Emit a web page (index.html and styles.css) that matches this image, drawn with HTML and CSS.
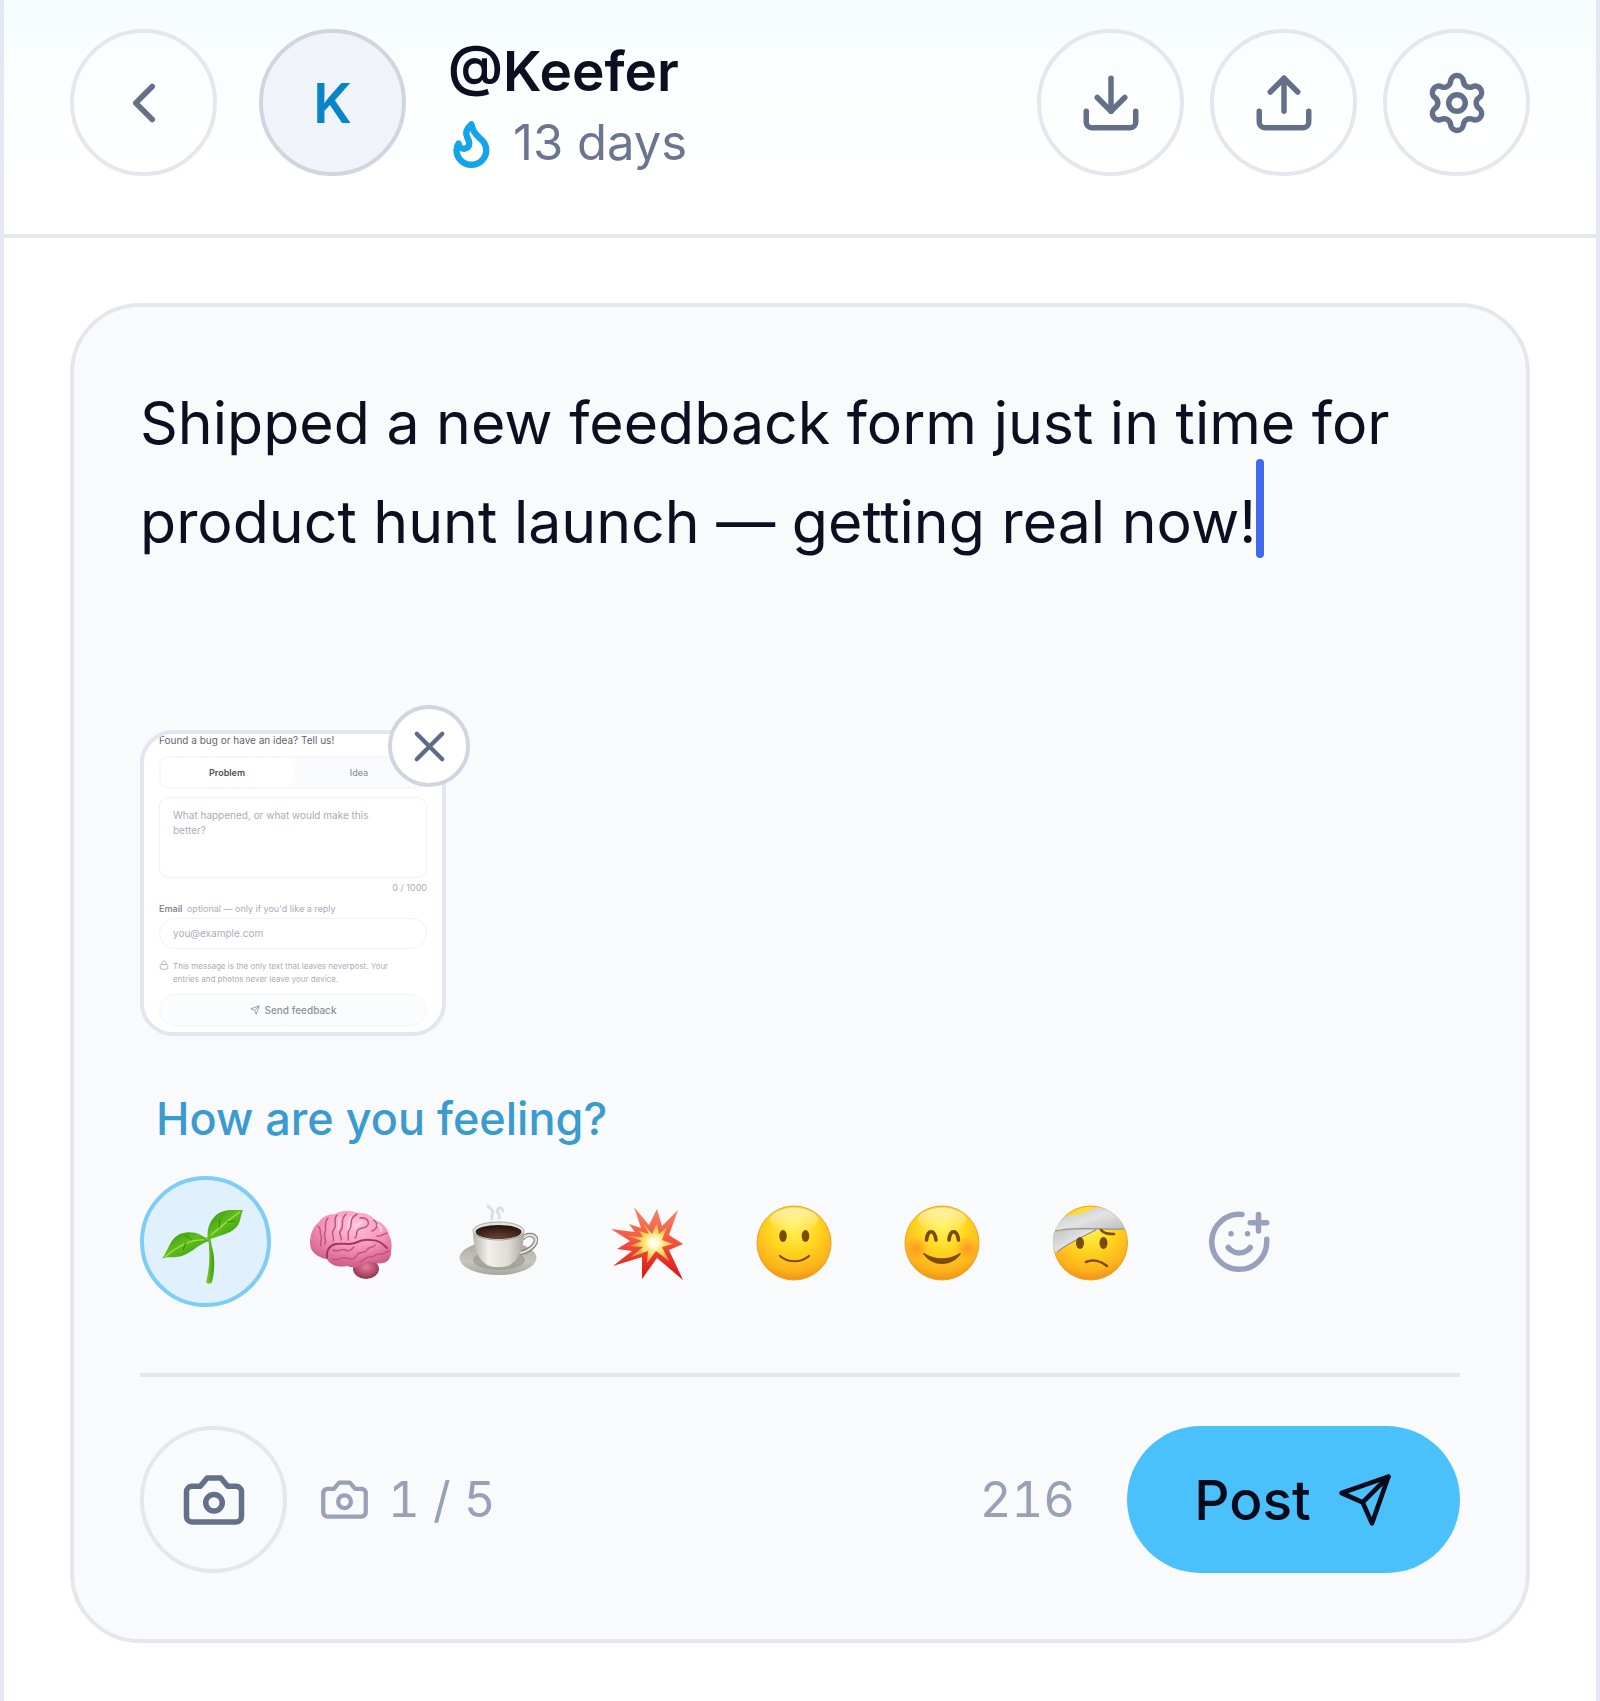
FILE: index.html
```html
<!DOCTYPE html>
<html lang="en">
<head>
<meta charset="utf-8">
<meta name="viewport" content="width=device-width, initial-scale=1">
<title>@Keefer</title>
<link rel="stylesheet" href="styles.css">
</head>
<body>
<div class="app">
  <header class="topbar">
    <button class="round-btn" type="button" aria-label="Back">
      <svg class="icon" viewBox="0 0 24 24"><path d="m15 18-6-6 6-6"/></svg>
    </button>
    <div class="avatar">K</div>
    <div class="profile">
      <h1 class="handle">@Keefer</h1>
      <p class="streak">
        <svg class="icon icon-small flame" viewBox="1 0 24 24"><path d="M8.5 14.5A2.5 2.5 0 0 0 11 12c0-1.38-.5-2-1-3-1.072-2.143-.224-4.054 2-6 .5 2.5 2 4.9 4 6.5 2 1.6 3 3.5 3 5.5a7 7 0 1 1-14 0c0-1.153.433-2.294 1-3a2.5 2.5 0 0 0 2.5 2.5z"/></svg>
        <span>13 days</span>
      </p>
    </div>
    <div class="actions">
      <button class="round-btn" type="button" aria-label="Download">
        <svg class="icon" viewBox="0 0 24 24"><path d="M21 15v4a2 2 0 0 1-2 2H5a2 2 0 0 1-2-2v-4"/><path d="m7 10 5 5 5-5"/><path d="M12 15V3"/></svg>
      </button>
      <button class="round-btn" type="button" aria-label="Upload">
        <svg class="icon" viewBox="0 0 24 24"><path d="M21 15v4a2 2 0 0 1-2 2H5a2 2 0 0 1-2-2v-4"/><path d="m17 8-5-5-5 5"/><path d="M12 3v12"/></svg>
      </button>
      <button class="round-btn" type="button" aria-label="Settings">
        <svg class="icon" viewBox="0 0 24 24"><path d="M9.671 4.136a2.34 2.34 0 0 1 4.659 0 2.34 2.34 0 0 0 3.319 1.915 2.34 2.34 0 0 1 2.33 4.033 2.34 2.34 0 0 0 0 3.831 2.34 2.34 0 0 1-2.33 4.033 2.34 2.34 0 0 0-3.319 1.915 2.34 2.34 0 0 1-4.659 0 2.34 2.34 0 0 0-3.32-1.915 2.34 2.34 0 0 1-2.33-4.033 2.34 2.34 0 0 0 0-3.831A2.34 2.34 0 0 1 6.35 6.051a2.34 2.34 0 0 0 3.319-1.915"/><circle cx="12" cy="12" r="3"/></svg>
      </button>
    </div>
  </header>

  <main class="content">
    <form class="composer">
      <div class="entry">
        <textarea class="entry-text" rows="3" aria-label="New entry" spellcheck="false">Shipped a new feedback form just in time for product hunt launch — getting real now!</textarea>
        <span class="caret"></span>
      </div>

      <div class="attachment">
        <div class="shot" role="img" aria-label="Feedback form">
          <p class="shot-title">Found a bug or have an idea? Tell us!</p>
          <div class="shot-tabs"><span class="shot-tab shot-tab-on">Problem</span><span class="shot-tab">Idea</span></div>
          <div class="shot-area">What happened, or what would make this better?</div>
          <p class="shot-count">0 / 1000</p>
          <p class="shot-label"><b>Email</b> optional — only if you'd like a reply</p>
          <div class="shot-input">you@example.com</div>
          <div class="shot-note">
            <svg class="shot-icon" viewBox="0 0 24 24"><rect x="3" y="11" width="18" height="11" rx="2"/><path d="M7 11V7a5 5 0 0 1 10 0v4"/></svg>
            <p>This message is the only text that leaves neverpost. Your entries and photos never leave your device.</p>
          </div>
          <div class="shot-send">
            <svg class="shot-icon" viewBox="0 0 24 24"><path d="m22 2-7 20-4-9-9-4Z"/><path d="M22 2 11 13"/></svg>
            <span>Send feedback</span>
          </div>
        </div>
        <button class="remove" type="button" aria-label="Remove photo">
          <svg class="icon icon-small" viewBox="0 0 24 24"><path d="M18 6 6 18"/><path d="m6 6 12 12"/></svg>
        </button>
      </div>

      <p class="mood-label" id="mood-label">How are you feeling?</p>
      <div class="moods" role="group" aria-labelledby="mood-label">
        <button class="mood mood-on" type="button" aria-label="Growing" aria-pressed="true">
          <svg class="emoji" viewBox="0 0 88 88">
            <defs>
              <linearGradient id="leaf" x1="0" y1="0" x2="1" y2="1"><stop offset="0" stop-color="#2f8f10"/><stop offset=".45" stop-color="#62bd1c"/><stop offset="1" stop-color="#2f930c"/></linearGradient>
              <linearGradient id="stem" x1="0" y1="0" x2="1" y2="0"><stop offset="0" stop-color="#8fd63b"/><stop offset="1" stop-color="#3e9a12"/></linearGradient>
            </defs>
            <path fill="url(#stem)" d="M43 39c3 2 4 5 4 10 1 12 0 24-3 35 1 2 5 2 6 0 3-12 3-25 0-35-1-5-1-8-3-10z"/>
            <path fill="url(#leaf)" d="M46 42C44 30 49 20 57 15c7-4 15-3 24-3-2 4-2 8-4 13-5 11-19 12-31 17z"/>
            <path fill="url(#leaf)" d="M47 43C39 35 29 32 18 36 8 40 6 53 0 61c5-3 8-1 14-2 14-1 20-12 33-16z"/>
            <path fill="none" stroke="#a5e04d" stroke-width="1.3" d="M49 37C58 30 66 22 78 14M42 42C29 41 16 48 3 59"/>
            <path fill="none" stroke="#277f0b" stroke-width=".8" d="M57 30l1-9M65 24l8-1M30 42l-7-5M24 44l-3 8"/>
          </svg>
        </button>
        <button class="mood" type="button" aria-label="Thinking">
          <svg class="emoji" viewBox="0 0 88 88">
            <defs>
              <radialGradient id="brain" cx=".55" cy=".25" r=".75"><stop offset="0" stop-color="#fdc3d8"/><stop offset=".5" stop-color="#f799bb"/><stop offset="1" stop-color="#cf5a86"/></radialGradient>
              <radialGradient id="cereb" cx=".5" cy=".4" r=".6"><stop offset="0" stop-color="#e5819c"/><stop offset="1" stop-color="#93304f"/></radialGradient>
            </defs>
            <ellipse cx="56" cy="71" rx="13" ry="10" fill="url(#cereb)"/>
            <path fill="url(#brain)" d="M17 61C8 60 0 54 0 45c0-7 2-15 8-20 4-6 10-9 17-9 7-4 16-4 22-1 8-1 14 2 18 7 7 2 13 8 14 15 3 5 3 12 2 17 0 7-4 11-9 11-6 2-10-2-15-1-5 7-15 6-20 4-9 2-17-1-20-7z"/>
            <g fill="none" stroke="#c4537f" stroke-width="1.5" stroke-linecap="round">
              <path stroke="#a23763" stroke-width="2" d="M17 60c-1-8 3-13 9-14 8-1 12 1 19-1 6-3 10-4 16-3 8 0 12 4 16 8"/>
              <path d="M8 28c4 3 1 7 3 10s-2 6 0 10M18 20c-5 6-1 9-3 14s2 7 0 12M27 17c-5 5 1 9-3 14s1 8-1 12M36 16c-7 7-1 11-5 16s2 6 0 10M47 16c-10 6-3 11-8 16-2 4 0 7-1 10M50 20c8-1 10 5 7 8s-6 1-9 4 0 6-3 8M64 22c5 5 3 9-2 11M77 35c-4 1-6 4-10 3"/>
              <path d="M23 52c5 3 8-2 12 0s6 0 9-3M23 61c6 3 8-3 13-1s9 1 11-3 8-1 10-5 7-2 8-5M50 64c4-1 5-6 10-5s5-4 10-3 4-2 9-3"/>
            </g>
            <g fill="none" stroke="#ffd9e6" stroke-width="2" stroke-linecap="round" opacity=".8"><path d="M30 20c-2 4 0 7-2 11M41 19c-4 5-1 8-3 12M52 24c-3 2-6 2-7 6M68 27c3 2 4 4 3 6"/></g>
          </svg>
        </button>
        <button class="mood" type="button" aria-label="Coffee">
          <svg class="emoji" viewBox="0 0 88 88">
            <defs>
              <linearGradient id="saucer" x1="0" y1="0" x2="0" y2="1"><stop offset="0" stop-color="#a6a69f"/><stop offset=".6" stop-color="#c6c6be"/><stop offset="1" stop-color="#a7a79e"/></linearGradient>
              <linearGradient id="cup" x1="0" y1="0" x2="1" y2="0"><stop offset="0" stop-color="#b5b4ac"/><stop offset=".3" stop-color="#f1f0ea"/><stop offset=".7" stop-color="#dddcd4"/><stop offset="1" stop-color="#a9a89f"/></linearGradient>
              <radialGradient id="coffee" cx=".5" cy=".9" r=".8"><stop offset="0" stop-color="#6a4331"/><stop offset="1" stop-color="#281510"/></radialGradient>
            </defs>
            <path fill="none" stroke="#cfd2d4" stroke-width="3" stroke-linecap="round" opacity=".7" d="M34 21c-2-4 3-5 0-9-2-3-4-2-4-4M41 20c2-4-4-6-1-9 2-2 4-1 5 2"/>
            <ellipse cx="40" cy="60" rx="38.5" ry="17" fill="url(#saucer)"/>
            <ellipse cx="41" cy="62" rx="26" ry="10" fill="#92928a" opacity=".6"/>
            <path fill="none" stroke="#777870" stroke-width="4.5" d="M64 41c3-4 8-5 12-3 5 4 0 14-14 17"/>
            <path fill="none" stroke="#dedfd8" stroke-width="2.5" d="M64 41c3-4 8-5 12-3 5 4 0 14-14 17"/>
            <path fill="url(#cup)" d="M15 34c0 17 6 28 14 33 7 3 16 3 23 0 8-5 14-16 14-33z"/>
            <ellipse cx="40.5" cy="33" rx="25.5" ry="9" fill="#e5e4dd" stroke="#96968f" stroke-width=".8"/>
            <ellipse cx="40.5" cy="34" rx="23" ry="7" fill="url(#coffee)"/>
          </svg>
        </button>
        <button class="mood" type="button" aria-label="Explosive">
          <svg class="emoji" viewBox="0 0 88 88">
            <defs>
              <linearGradient id="boom" x1="0" y1="0" x2="0" y2="1"><stop offset="0" stop-color="#fb8468"/><stop offset=".5" stop-color="#f0523c"/><stop offset="1" stop-color="#d70f12"/></linearGradient>
              <radialGradient id="spark" gradientUnits="userSpaceOnUse" cx="48" cy="45" r="22"><stop offset="0" stop-color="#fff"/><stop offset=".2" stop-color="#fffbd7"/><stop offset=".5" stop-color="#ffe064"/><stop offset="1" stop-color="#fb9a43"/></radialGradient>
            </defs>
            <path fill="url(#boom)" d="M28 9 43 27 51 11 56 28 72 12 63 37 77 46 63 52 77 82 51 60 36 81 36 59 7 68 26 53 11 51 24 43 5 31 29 34 23 26 35 30z"/>
            <path fill="url(#spark)" d="M38 26 46 36 51 25 53 36 61 29 56 42 67 46 56 49 63 63 50 53 41 65 42 53 25 59 37 49 24 48 36 43 22 38 37 39 33 33 43 36z"/>
          </svg>
        </button>
        <button class="mood" type="button" aria-label="Okay">
          <svg class="emoji" viewBox="0 0 88 88">
            <defs>
              <radialGradient id="face" cx=".5" cy=".28" r=".75"><stop offset="0" stop-color="#fff458"/><stop offset=".45" stop-color="#fed51f"/><stop offset=".8" stop-color="#fdb21b"/><stop offset="1" stop-color="#ee8a16"/></radialGradient>
              <linearGradient id="shine" x1="0" y1="0" x2="0" y2="1"><stop offset="0" stop-color="#fff" stop-opacity=".6"/><stop offset="1" stop-color="#fff" stop-opacity="0"/></linearGradient>
            </defs>
            <circle cx="40" cy="45" r="37" fill="url(#face)" stroke="#f2a025"/>
            <ellipse cx="40" cy="22" rx="24" ry="12" fill="url(#shine)"/>
            <ellipse cx="29" cy="38" rx="3.8" ry="6" fill="#7d4a06"/><ellipse cx="51.5" cy="38" rx="3.8" ry="6" fill="#7d4a06"/>
            <path fill="none" stroke="#7d4a06" stroke-width="2.2" stroke-linecap="round" d="M26 58c8 7 21 7 29 0"/>
          </svg>
        </button>
        <button class="mood" type="button" aria-label="Happy">
          <svg class="emoji" viewBox="0 0 88 88">
            <defs><radialGradient id="blush"><stop offset="0" stop-color="#ff7a2e" stop-opacity=".6"/><stop offset="1" stop-color="#ff7a2e" stop-opacity="0"/></radialGradient></defs>
            <circle cx="40" cy="45" r="37" fill="url(#face)" stroke="#f2a025"/>
            <ellipse cx="40" cy="22" rx="24" ry="12" fill="url(#shine)"/>
            <circle cx="15" cy="50" r="12" fill="url(#blush)"/><circle cx="65" cy="50" r="12" fill="url(#blush)"/>
            <path fill="none" stroke="#7d4a06" stroke-width="3.6" stroke-linecap="round" d="M24.5 42c1-11 8-11 9.500 0M47 42c1-11 8-11 9.500 0"/>
            <path fill="#7d4a06" d="M22 55c11 7 25 7 36 0 1 0 1 1 0 2-9 12-27 12-36 0-1-1-1-2 0-2z"/>
          </svg>
        </button>
        <button class="mood" type="button" aria-label="Hurt">
          <svg class="emoji" viewBox="0 0 88 88">
            <defs><linearGradient id="wrap" x1="0" y1="0" x2="1" y2="1"><stop offset="0" stop-color="#bfc0c2"/><stop offset=".5" stop-color="#e2e3e4"/><stop offset="1" stop-color="#b9babc"/></linearGradient></defs>
            <circle cx="40.5" cy="45" r="37" fill="url(#face)" stroke="#f2a025"/>
            <path fill="url(#wrap)" d="M4 34c22-4 34-4 42-3C32 39 18 45 6 55c-4-6-4-14-2-21z"/>
            <path fill="url(#wrap)" d="M5 32c2-6 6-11 11-14 10-1 20-3 31-9 13 2 24 10 28 22-23 2-45-2-70 2z"/>
            <path fill="none" stroke="#8f9193" stroke-width="1.2" d="M5 33c22-5 43-1 69-2M46 32C32 39 18 45 7 54"/>
            <ellipse cx="30" cy="45" rx="4" ry="6" fill="#7d4a06"/><ellipse cx="53.5" cy="45" rx="4" ry="6" fill="#7d4a06"/>
            <path fill="none" stroke="#7d4a06" stroke-width="2.5" stroke-linecap="round" d="M51 32c3 4 8 4 13 4M36 64c7-3 15-1 21 4"/>
          </svg>
        </button>
        <button class="mood mood-add" type="button" aria-label="Add a feeling">
          <svg class="icon" viewBox="1 0 24 24"><path d="M22 11v1a10 10 0 1 1-9-10"/><path d="M8 14s1.500 2 4 2 4-2 4-2"/><path d="M9 9h.01M15 9h.01M16 5h6M19 2v6"/></svg>
        </button>
      </div>

      <div class="footer">
        <button class="round-btn" type="button" aria-label="Add photo">
          <svg class="icon" viewBox="0 0 24 24"><path d="M14.500 4h-5L7 7H4a2 2 0 0 0-2 2v9a2 2 0 0 0 2 2h16a2 2 0 0 0 2-2V9a2 2 0 0 0-2-2h-3l-2.500-3z"/><circle cx="12" cy="13" r="3"/></svg>
        </button>
        <p class="meta photos">
          <svg class="icon icon-small" viewBox="0 0 24 24"><path d="M14.500 4h-5L7 7H4a2 2 0 0 0-2 2v9a2 2 0 0 0 2 2h16a2 2 0 0 0 2-2V9a2 2 0 0 0-2-2h-3l-2.500-3z"/><circle cx="12" cy="13" r="3"/></svg>
          <span>1 / 5</span>
        </p>
        <p class="meta">216</p>
        <button class="post" type="submit">
          <span>Post</span>
          <svg class="icon icon-medium" viewBox="0 0 24 24"><path d="m22 2-7 20-4-9-9-4Z"/><path d="M22 2 11 13"/></svg>
        </button>
      </div>
    </form>
  </main>
</div>
</body>
</html>
```

FILE: styles.css
```css
* {
  box-sizing: border-box;
}

body,
h1,
p {
  margin: 0;
}

body {
  background: #fff;
  color: #0b0f1f;
  font-family: Inter, "Liberation Sans", sans-serif;
}

button,
textarea {
  margin: 0;
  padding: 0;
  border: 0;
  background: none;
  color: inherit;
  font: inherit;
}

.app {
  min-height: 100vh;
  border: solid #e4e8f2;
  border-width: 0 4px;
  background: linear-gradient(#f5fcff, #fdffff 110px, #fff 180px);
}

.icon {
  display: block;
  flex: none;
  width: 66px;
  height: 66px;
  fill: none;
  stroke: currentColor;
  stroke-width: 2;
  stroke-linecap: round;
  stroke-linejoin: round;
}

.icon-small {
  width: 51px;
  height: 51px;
}

.icon-medium {
  width: 56px;
  height: 56px;
}

/* Header */

.topbar {
  display: flex;
  align-items: center;
  gap: 42px;
  padding: 29px 66px 58px;
  border-bottom: 4px solid #e5e7eb;
}

.round-btn,
.avatar {
  display: flex;
  flex: none;
  align-items: center;
  justify-content: center;
  width: 147px;
  height: 147px;
  border: 4px solid #e5e7ee;
  border-radius: 50%;
  color: #64708a;
}

.avatar {
  border-color: #d0d6e0;
  background: #f0f4f9;
  color: #0a84c8;
  font-size: 55px;
  font-weight: 600;
}

.profile {
  display: flex;
  flex: 1;
  flex-direction: column;
  gap: 3px;
  padding-top: 6px;
}

.handle {
  font-size: 55px;
  font-weight: 600;
  line-height: 72px;
}

.streak {
  display: flex;
  align-items: center;
  gap: 14px;
  color: #6b7590;
  font-size: 49px;
  line-height: 66px;
}

.flame {
  color: #14a4ea;
  stroke-width: 3;
}

.actions {
  display: flex;
  gap: 26px;
}

/* Composer */

.content {
  padding: 65px 66px 58px;
}

.composer {
  padding: 66px;
  border: 4px solid #e4e7ec;
  border-radius: 70px;
  background: #f8fafc;
}

.entry {
  position: relative;
}

.entry-text {
  display: block;
  width: 100%;
  outline: 0;
  overflow: hidden;
  resize: none;
  font-size: 59px;
  line-height: 99px;
}

.caret {
  position: absolute;
  top: 86px;
  left: 1116px;
  width: 8px;
  height: 99px;
  border-radius: 4px;
  background: #4169ee;
}

.attachment {
  position: relative;
  width: 306px;
  margin-top: 60px;
}

.remove {
  position: absolute;
  top: -25px;
  right: -24px;
  display: flex;
  align-items: center;
  justify-content: center;
  width: 82px;
  height: 82px;
  border: 4px solid #cfd5e1;
  border-radius: 50%;
  background: #fff;
  color: #5f6a86;
}

/* Attached picture */

.shot {
  height: 306px;
  padding: 0 15px;
  overflow: hidden;
  border: 4px solid #e2e6ef;
  border-radius: 33px;
  background: #fff;
  color: #a9adb8;
  font-size: 10px;
  line-height: 12px;
}

.shot-title {
  color: #62656e;
}

.shot-tabs {
  display: flex;
  height: 33px;
  margin-top: 10px;
  border: 2px solid #f6f7fa;
  border-radius: 10px;
  background: #fafbfd;
}

.shot-tab {
  flex: 1;
  border-radius: 8px;
  color: #8e929c;
  font-size: 9px;
  font-weight: 500;
  line-height: 29px;
  text-align: center;
}

.shot-tab-on {
  background: #fff;
  color: #4d5059;
  font-weight: 600;
}

.shot-area {
  height: 81px;
  margin-top: 8px;
  padding: 10px 40px 0 13px;
  border: 1px solid #f0f1f5;
  border-radius: 10px;
  line-height: 15px;
}

.shot-count {
  margin-top: 4px;
  font-size: 9px;
  text-align: right;
}

.shot-label {
  margin-top: 9px;
  font-size: 9px;
  white-space: nowrap;
}

.shot-label b {
  margin-right: 2px;
  color: #858993;
  font-weight: 600;
}

.shot-input {
  height: 31px;
  margin-top: 3px;
  padding-left: 13px;
  border: 1px solid #f0f1f5;
  border-radius: 16px;
  line-height: 29px;
}

.shot-note {
  display: flex;
  gap: 4px;
  margin-top: 11px;
  padding-right: 20px;
  font-size: 8px;
  line-height: 13px;
}

.shot-icon {
  flex: none;
  width: 10px;
  height: 10px;
  fill: none;
  stroke: currentColor;
  stroke-width: 2;
  stroke-linejoin: round;
}

.shot-send {
  display: flex;
  align-items: center;
  justify-content: center;
  gap: 5px;
  height: 32px;
  margin-top: 8px;
  border: 1px solid #f2f4f7;
  border-radius: 16px;
  background: #fafcfd;
  color: #8e929a;
  font-weight: 500;
}

/* Moods */

.mood-label {
  margin-top: 53px;
  padding-left: 16px;
  color: #3a9bd0;
  font-size: 45px;
  font-weight: 500;
  line-height: 60px;
}

.moods {
  display: flex;
  gap: 17px;
  margin-top: 27px;
}

.mood {
  display: flex;
  flex: none;
  align-items: center;
  justify-content: center;
  width: 131px;
  height: 131px;
  border: 4px solid transparent;
  border-radius: 50%;
}

.mood-on {
  border-color: #7dcdf6;
  background: #e0f1fd;
}

.mood-add {
  color: #98a1bb;
}

.emoji {
  display: block;
  flex: none;
  width: 88px;
  height: 88px;
  overflow: visible;
}

/* Footer */

.footer {
  display: flex;
  align-items: center;
  margin-top: 66px;
  padding-top: 49px;
  border-top: 4px solid #e2e5ea;
}

.meta {
  color: #98a1b6;
  font-size: 49px;
  font-variant-numeric: tabular-nums;
  line-height: 60px;
}

.photos {
  display: flex;
  flex: 1;
  align-items: center;
  gap: 18px;
  margin-left: 32px;
}

.post {
  display: flex;
  align-items: center;
  justify-content: center;
  gap: 26px;
  width: 333px;
  height: 147px;
  margin-left: 52px;
  border-radius: 74px;
  background: #4ac1fa;
  color: #050b1c;
  font-size: 55px;
  font-weight: 500;
}
```
